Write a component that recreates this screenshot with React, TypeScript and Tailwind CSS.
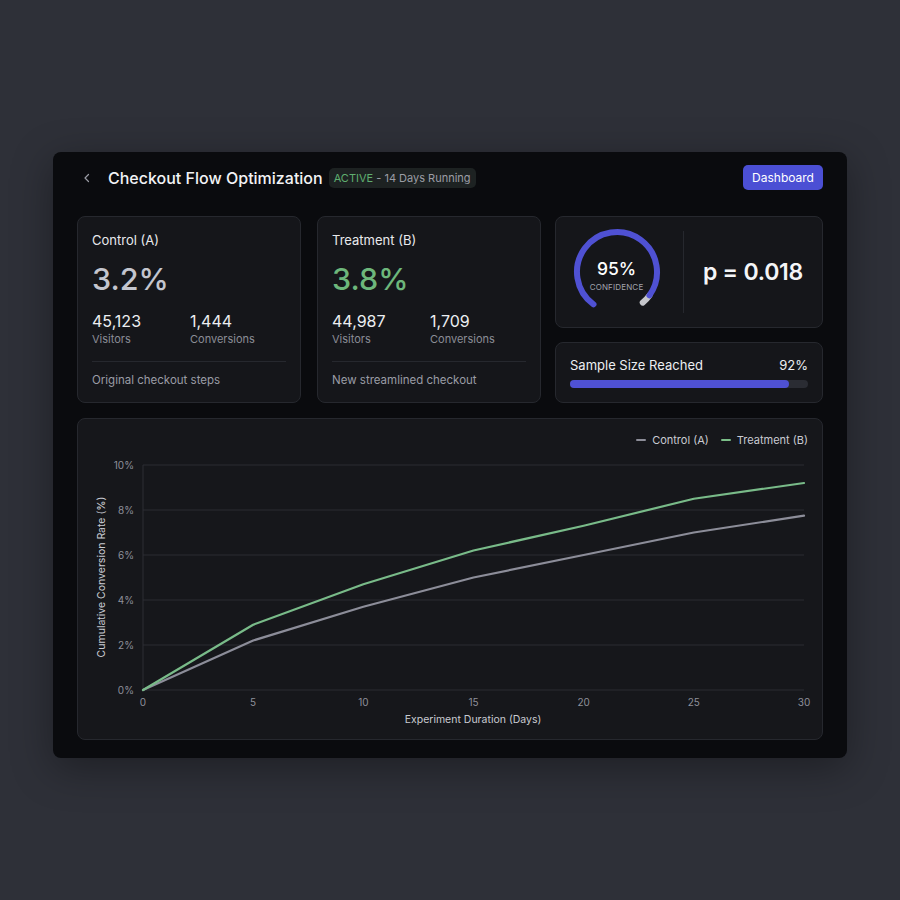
import React from "react";

const treatment = [0, 2.9, 4.7, 6.2, 7.3, 8.5, 9.2];
const control = [0, 2.2, 3.7, 5.0, 6.0, 7.0, 7.75];

const X0 = 65;
const X1 = 726;
const Y0 = 243;
const Y10 = 18;
const px = (i: number) => X0 + ((X1 - X0) * i) / 6;
const py = (v: number) => Y0 - ((Y0 - Y10) * v) / 10;

function pts(d: number[]) {
  return d.map((v, i) => `${px(i)},${py(v)}`).join(" ");
}

function StatCard({
  title,
  rate,
  rateClass,
  visitors,
  conversions,
  note,
}: {
  title: string;
  rate: string;
  rateClass: string;
  visitors: string;
  conversions: string;
  note: string;
}) {
  return (
    <div className="w-[224px] h-[187px] rounded-lg border border-[#26282e] bg-[#15161a] px-[14px] pt-[14px]">
      <div className="text-[13px] leading-[18px] text-[#e8e9ec]">{title}</div>
      <div className={`mt-[12px] text-[30.5px] leading-[36px] font-medium ${rateClass}`}>{rate}</div>
      <div className="mt-[14px] flex">
        <div className="w-[98px]">
          <div className="text-[16px] leading-[20px] text-[#eceef1]">{visitors}</div>
          <div className="text-[11px] leading-[16px] text-[#8b8d96]">Visitors</div>
        </div>
        <div>
          <div className="text-[16px] leading-[20px] text-[#eceef1]">{conversions}</div>
          <div className="text-[11px] leading-[16px] text-[#8b8d96]">Conversions</div>
        </div>
      </div>
      <div className="mt-[14px] border-t border-[#26282e]" />
      <div className="mt-[10px] text-[11.5px] leading-[16px] text-[#9a9ca5]">{note}</div>
    </div>
  );
}

function Gauge() {
  const cx = 48;
  const cy = 48;
  const r = 40;
  const pt = (deg: number) => {
    const a = ((deg - 90) * Math.PI) / 180;
    return [cx + r * Math.cos(a), cy + r * Math.sin(a)];
  };
  const start = 216;
  const total = 284;
  const splitDeg = start + total * 0.95;
  const endDeg = start + total;
  const [sx, sy] = pt(start);
  const [mx, my] = pt(splitDeg);
  const [ex, ey] = pt(endDeg);
  return (
    <div className="relative w-[96px] h-[96px]">
      <svg width="96" height="96" viewBox="0 0 96 96" className="absolute inset-0">
        <path
          d={`M ${mx} ${my} A ${r} ${r} 0 0 1 ${ex} ${ey}`}
          fill="none"
          stroke="#c5c6cb"
          strokeWidth="6"
          strokeLinecap="round"
        />
        <path
          d={`M ${sx} ${sy} A ${r} ${r} 0 1 1 ${mx} ${my}`}
          fill="none"
          stroke="#4f51d3"
          strokeWidth="6"
          strokeLinecap="round"
        />
      </svg>
      <div className="absolute inset-0 flex flex-col items-center justify-center pt-[7px]">
        <div className="text-[17.5px] leading-[20px] text-white font-medium">95%</div>
        <div className="mt-[3px] text-[8px] leading-[10px] tracking-[0.02em] text-[#a2a4ad]">CONFIDENCE</div>
      </div>
    </div>
  );
}

export default function App() {
  return (
    <div
      className="w-[900px] h-[900px] bg-[#2e3038] pl-[53px] pt-[152px]"
      style={{ fontFamily: "Inter, 'Noto Sans', sans-serif" }}
    >
      <div className="w-[794px] h-[606px] rounded-lg bg-[#0a0b0e] px-6 pt-[13px] shadow-[0_10px_40px_rgba(0,0,0,0.35)]">
        {/* header */}
        <div className="h-[25px] flex items-center justify-between">
          <div className="flex items-center">
            <svg width="12" height="12" viewBox="0 0 12 12" className="ml-[4px]">
              <path d="M7.5 2.5 L4 6 L7.5 9.5" fill="none" stroke="#9a9ca5" strokeWidth="1.2" strokeLinecap="round" strokeLinejoin="round" />
            </svg>
            <div className="ml-[15px] text-[16px] leading-[22px] font-medium text-[#f2f3f5]">Checkout Flow Optimization</div>
            <div className="ml-[6px] h-[20px] rounded-[5px] bg-[#1d2222] px-[5px] flex items-center text-[11px] leading-[14px]">
              <span className="text-[#5fae70]">ACTIVE</span>
              <span className="text-[#9b9da5]">&nbsp;- 14 Days Running</span>
            </div>
          </div>
          <div className="h-[25px] w-[80px] rounded-[5px] bg-[#4b4fd4] flex items-center justify-center text-[12px] text-white">
            Dashboard
          </div>
        </div>

        {/* cards */}
        <div className="mt-[26px] flex">
          <StatCard
            title="Control (A)"
            rate="3.2%"
            rateClass="text-[#c3c5ce]"
            visitors="45,123"
            conversions="1,444"
            note="Original checkout steps"
          />
          <div className="ml-4">
            <StatCard
              title="Treatment (B)"
              rate="3.8%"
              rateClass="text-[#6db77b]"
              visitors="44,987"
              conversions="1,709"
              note="New streamlined checkout"
            />
          </div>
          <div className="ml-[14px] w-[268px] flex flex-col">
            <div className="h-[112px] rounded-lg border border-[#26282e] bg-[#15161a] flex items-center">
              <div className="w-[127px] flex justify-center pr-[6px]">
                <Gauge />
              </div>
              <div className="h-[82px] border-l border-[#26282e]" />
              <div className="flex-1 text-center text-[23px] font-semibold text-[#f4f5f7] tracking-[-0.01em]">p = 0.018</div>
            </div>
            <div className="mt-[14px] h-[61px] rounded-lg border border-[#26282e] bg-[#15161a] px-[14px] pt-[14px]">
              <div className="flex justify-between text-[13px] leading-[16px] text-[#eceef1]">
                <span>Sample Size Reached</span>
                <span>92%</span>
              </div>
              <div className="mt-[7px] h-[8px] rounded-full bg-[#2a2c33]">
                <div className="h-[8px] rounded-full bg-[#4f51d3]" style={{ width: "92%" }} />
              </div>
            </div>
          </div>
        </div>

        {/* chart */}
        <div className="mt-[15px] h-[322px] rounded-lg border border-[#26282e] bg-[#16171b]">
          <div className="pt-[14px] pr-[14px] h-[28px] flex justify-end items-center gap-[12px] text-[11px] text-[#c9cbd2]">
            <div className="flex items-center gap-[6px]">
              <span className="w-[10px] h-[2px] bg-[#8c8d98] rounded" />
              <span>Control (A)</span>
            </div>
            <div className="flex items-center gap-[6px]">
              <span className="w-[10px] h-[2px] bg-[#7bbf88] rounded" />
              <span>Treatment (B)</span>
            </div>
          </div>
          <svg width="744" height="292" viewBox="0 0 744 292" className="block">
            {[0, 2, 4, 6, 8, 10].map((v) => (
              <g key={v}>
                <line x1={X0} x2={X1} y1={py(v)} y2={py(v)} stroke="#2a2c33" strokeWidth="1" />
                <text
                  x={56}
                  y={py(v) + 3.5}
                  textAnchor="end"
                  fontSize="10"
                  fill="#8e909a"
                  fontFamily="Inter, sans-serif"
                >
                  {v}%
                </text>
              </g>
            ))}
            <line x1={X0} x2={X0} y1={Y10} y2={Y0} stroke="#2c2e35" strokeWidth="1" />
            {[0, 5, 10, 15, 20, 25, 30].map((d, i) => (
              <text
                key={d}
                x={px(i)}
                y={259}
                textAnchor="middle"
                fontSize="10"
                fill="#8e909a"
                fontFamily="Inter, sans-serif"
              >
                {d}
              </text>
            ))}
            <text x={395} y={276} textAnchor="middle" fontSize="10.5" fill="#c9cbd2" fontFamily="Inter, sans-serif">
              Experiment Duration (Days)
            </text>
            <text
              x={0}
              y={0}
              transform="translate(27 130) rotate(-90)"
              textAnchor="middle"
              fontSize="10.5"
              fill="#c9cbd2"
              fontFamily="Inter, sans-serif"
            >
              Cumulative Conversion Rate (%)
            </text>
            <polyline points={pts(control)} fill="none" stroke="#8c8d99" strokeWidth="2.2" strokeLinejoin="round" strokeLinecap="round" />
            <polyline points={pts(treatment)} fill="none" stroke="#79bb89" strokeWidth="2.2" strokeLinejoin="round" strokeLinecap="round" />
          </svg>
        </div>
      </div>
    </div>
  );
}
